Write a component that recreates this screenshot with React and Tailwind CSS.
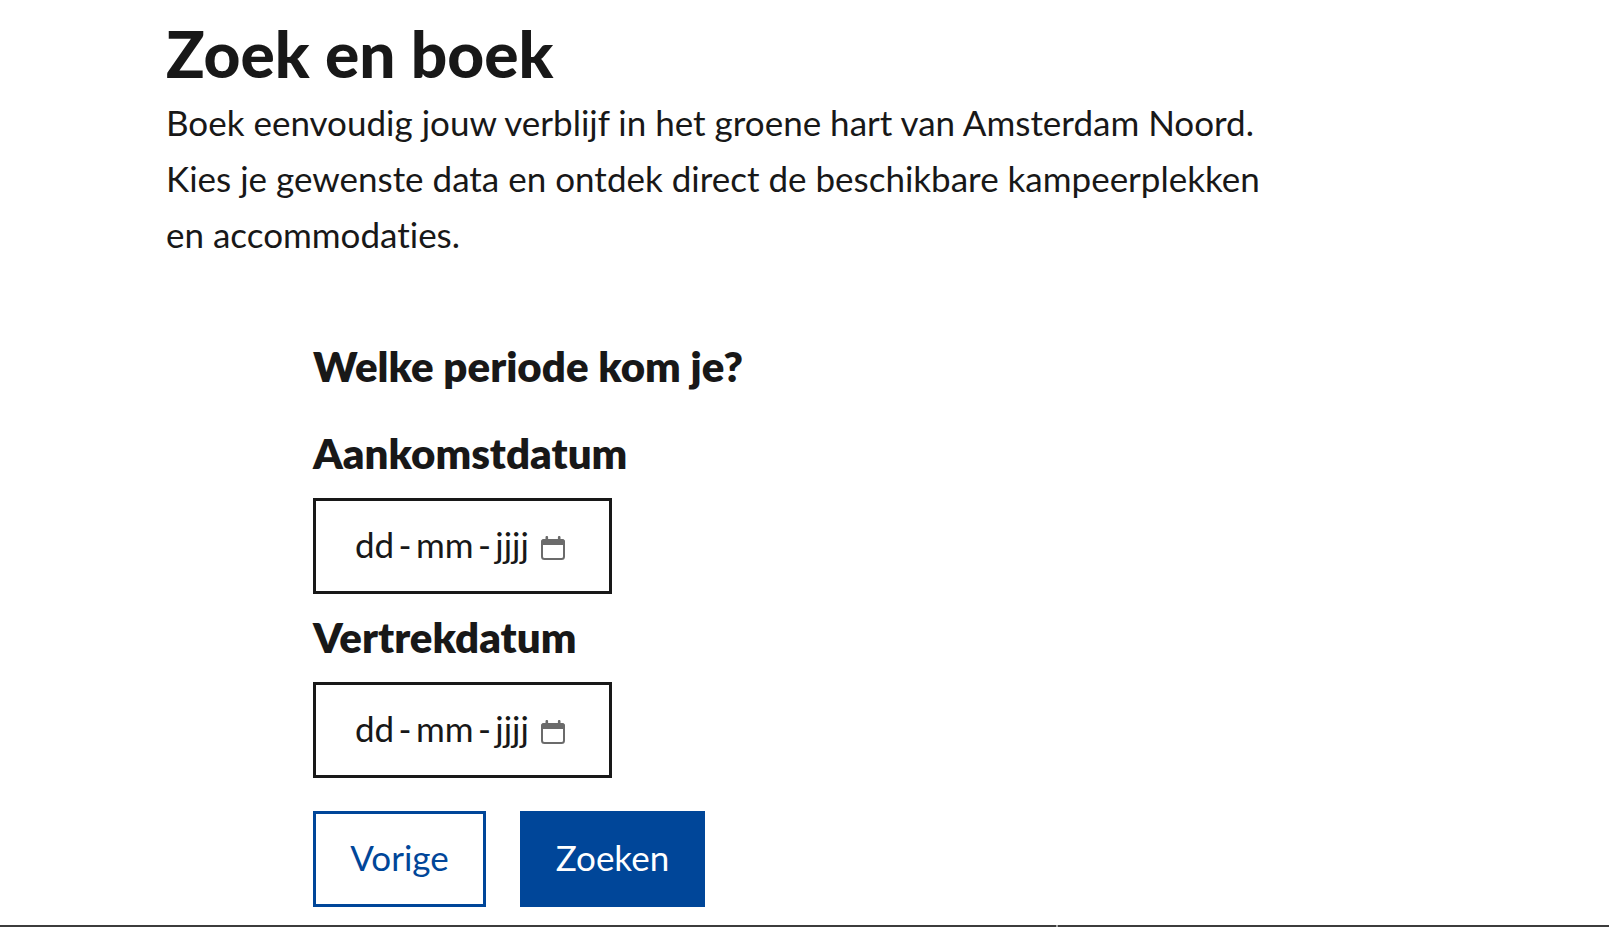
import { useId, useState } from "react";

function CalendarIcon() {
  return (
    <svg width="24" height="24" viewBox="0 0 24 24" fill="none" aria-hidden="true">
      <rect x="1" y="4" width="22" height="19" rx="2.5" stroke="#6b6b6b" strokeWidth="2" />
      <path d="M0 9V6a3 3 0 0 1 3-3h1.5V1.2a1.3 1.3 0 0 1 2.6 0V3h9.8V1.2a1.3 1.3 0 0 1 2.6 0V3H21a3 3 0 0 1 3 3v3z" fill="#6b6b6b" />
    </svg>
  );
}

function DateField({ label }) {
  const id = useId();
  const [value, setValue] = useState("");
  return (
    <div className="flex flex-col items-start gap-[18px]">
      <label htmlFor={id} className="text-[42px] leading-[54px] font-extrabold">
        {label}
      </label>
      <div className="flex h-24 w-[299px] items-center border-3 border-[#181818] pr-11 pl-[39px]">
        <input
          id={id}
          type="text"
          value={value}
          onChange={(event) => setValue(event.target.value)}
          placeholder={"dd\u2009-\u2009mm\u2009-\u2009jjjj"}
          className="min-w-0 flex-1 bg-transparent pb-1 text-[35px] leading-14 outline-none placeholder:text-[#181818] placeholder:opacity-100"
        />
        <button type="button" aria-label="Kalender openen" className="pt-1">
          <CalendarIcon />
        </button>
      </div>
    </div>
  );
}

export default function App() {
  return (
    <div className="flex min-h-screen flex-col bg-white font-['Lato',sans-serif] text-[#181818] [font-variant-ligatures:no-common-ligatures]">
      <main className="mx-auto w-full max-w-[1277px] pt-[18px] pb-4">
        <h1 className="text-[64px] leading-[72px] font-black">Zoek en boek</h1>
        <p className="max-w-[1120px] pt-1 text-[35px] leading-14">
          Boek eenvoudig jouw verblijf in het groene hart van Amsterdam Noord. Kies je gewenste data en ontdek direct de
          beschikbare kampeerplekken en accommodaties.
        </p>
        <form className="flex flex-col gap-[33px] pt-[77px] pl-[147px]" onSubmit={(event) => event.preventDefault()}>
          <h2 className="text-[42px] leading-[54px] font-extrabold">Welke periode kom je?</h2>
          <div className="flex flex-col gap-4">
            <DateField label="Aankomstdatum" />
            <DateField label="Vertrekdatum" />
          </div>
          <div className="flex gap-[34px]">
            <button type="button" className="h-24 w-[173px] border-3 border-[#004699] pb-1 text-[35px] text-[#004699]">
              Vorige
            </button>
            <button type="submit" className="h-24 w-[185px] bg-[#004699] pb-1 text-[35px] text-white">
              Zoeken
            </button>
          </div>
        </form>
      </main>
      <footer className="mt-auto flex h-[2px] gap-[2px] bg-[#a8a8a8]">
        <div className="w-[1056px] bg-[#3c3c3c]" />
        <div className="flex-1 bg-[#3c3c3c]" />
      </footer>
    </div>
  );
}
